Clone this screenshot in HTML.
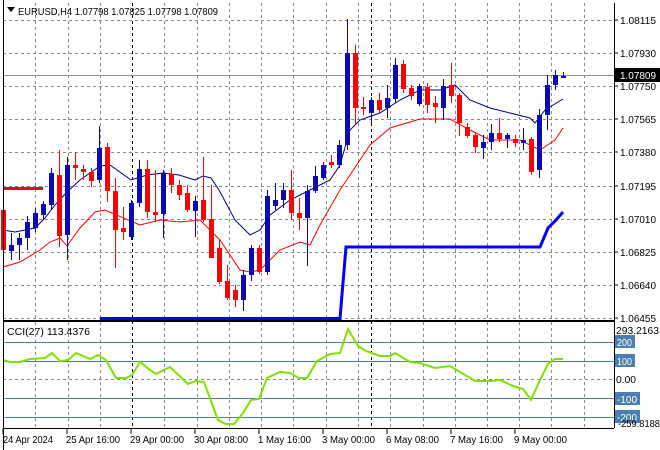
<!DOCTYPE html>
<html><head><meta charset="utf-8"><style>
html,body{margin:0;padding:0;background:#fff;width:660px;height:450px;overflow:hidden}
svg{display:block;font-family:"Liberation Sans",sans-serif;font-size:10.5px}
</style></head><body>
<svg width="660" height="450" xmlns="http://www.w3.org/2000/svg">
<rect width="660" height="450" fill="#fff"/>
<g stroke="#7f8a96" stroke-width="1" stroke-dasharray="3,3">
<path d="M3 20.5H614M3 53.5H614M3 86.5H614M3 119.5H614M3 152.5H614M3 186.5H614M3 219.5H614M3 252.5H614M3 285.5H614M3 318.5H614M3 379.5H614"/>
<path d="M35.5 3V320M100.5 3V320M164.5 3V320M229.5 3V320M293.5 3V320M326.5 3V320M390.5 3V320M423.5 3V320M455.5 3V320M487.5 3V320M519.5 3V320M551.5 3V320M584.5 3V320M68.5 3V320M197.5 3V320M261.5 3V320M358.5 3V320"/>
<path d="M35.5 322V428M68.5 322V428M100.5 322V428M164.5 322V428M197.5 322V428M229.5 322V428M261.5 322V428M293.5 322V428M326.5 322V428M358.5 322V428M390.5 322V428M423.5 322V428M455.5 322V428M487.5 322V428M519.5 322V428M551.5 322V428M584.5 322V428"/>
</g>
<g stroke="#000" stroke-dasharray="3,3"><path d="M132.5 3V428M371.5 3V428"/></g>
<path d="M3 75.5H614" stroke="#8a9098"/>
<g stroke="#4a7fb0"><path d="M3 342.5H614M3 361.5H614M3 398.5H614M3 417.5H614"/></g>
<path d="M3 188.5H43" stroke="#f00" stroke-width="3"/>
<path d="M100 318.5H340L346 247H540L548 228L556 220L563 212" fill="none" stroke="#0000ff" stroke-width="3"/>
<polyline fill="none" stroke="#000080" stroke-width="1" points="3,230 15,232 35,228 45,218 55,205 67,192 80,180 100,166 110,165 131,180 147,175 163,173 179,175 195,180 203,176 211,178 219,190 235,220 250,235 260,230 270,215 290,200 320,185 330,180 340,165 350,130 360,120 380,113 400,100 420,90 440,90 455,85 470,100 490,108 510,113 530,118 535,123 545,110 563,99"/>
<polyline fill="none" stroke="#f00" stroke-width="1" points="3,267 20,262 40,250 50,242 60,238 67,246 80,228 95,212 105,210 112,213 140,225 160,220 180,222 200,220 220,240 240,270 250,272 260,270 280,250 300,242 310,245 320,225 340,190 370,145 390,128 420,119 450,119 470,130 490,140 520,140 540,150 555,140 563,128"/>
<g stroke="#f00" fill="#f00">
<path d="M3.5 210V258M59.5 150V247M75.5 152V180M83.5 165V180M91.5 168V187M107.5 143V202M115.5 178V268M123.5 207V240M147.5 160V218M155.5 170V222M171.5 168V193M179.5 180V200M187.5 185V212M203.5 157V222M211.5 185V258M219.5 240V284M227.5 265V300M235.5 285V307M259.5 245V274M291.5 170V220M299.5 198V230M331.5 155V168M355.5 45V125M363.5 97V115M379.5 93V113M403.5 60V93M411.5 85V100M427.5 83V113M435.5 96V123M451.5 63V103M459.5 93V136M467.5 123V138M475.5 132V153M499.5 118V142M515.5 135V147M531.5 137V175"/>
</g>
<g fill="#f00">
<rect x="1" y="210" width="5" height="40"/><rect x="57" y="175" width="5" height="61"/><rect x="73" y="165" width="5" height="3"/><rect x="81" y="169" width="5" height="3"/><rect x="89" y="172" width="5" height="9"/><rect x="105" y="147" width="5" height="44"/><rect x="113" y="191" width="5" height="39"/><rect x="121" y="228" width="5" height="4"/><rect x="145" y="169" width="5" height="43"/><rect x="153" y="212" width="5" height="3"/><rect x="169" y="174" width="5" height="11"/><rect x="177" y="185" width="5" height="10"/><rect x="185" y="193" width="5" height="17"/><rect x="201" y="200" width="5" height="20"/><rect x="209" y="219" width="5" height="39"/><rect x="217" y="248" width="5" height="34"/><rect x="225" y="281" width="5" height="17"/><rect x="233" y="290" width="5" height="10"/><rect x="257" y="248" width="5" height="24"/><rect x="289" y="190" width="5" height="23"/><rect x="297" y="213" width="5" height="5"/><rect x="329" y="162" width="5" height="3"/><rect x="353" y="53" width="5" height="55"/><rect x="361" y="107" width="5" height="2"/><rect x="377" y="100" width="5" height="10"/><rect x="401" y="64" width="5" height="25"/><rect x="409" y="88" width="5" height="8"/><rect x="425" y="87" width="5" height="18"/><rect x="433" y="103" width="5" height="4"/><rect x="449" y="85" width="5" height="11"/><rect x="457" y="95" width="5" height="28"/><rect x="465" y="127" width="5" height="9"/><rect x="473" y="135" width="5" height="12"/><rect x="497" y="133" width="5" height="6"/><rect x="513" y="139" width="5" height="4"/><rect x="529" y="139" width="5" height="33"/>
</g>
<g stroke="#0000c0">
<path d="M11.5 233V260M19.5 233V260M27.5 216V250M35.5 208V232M43.5 201V220M51.5 168V210M67.5 157V260M99.5 126V183M131.5 200V240M139.5 160V207M163.5 170V238M195.5 196V237M243.5 270V311M251.5 245V281M267.5 190V275M275.5 183V210M283.5 183V208M307.5 185V266M315.5 166V193M323.5 162V180M339.5 140V168M347.5 19V150M371.5 97V125M387.5 85V118M395.5 58V103M419.5 84V106M443.5 79V120M483.5 135V159M491.5 124V150M507.5 133V148M523.5 128V150M539.5 109V178M547.5 75V130M555.5 70V90M563.5 72V78"/>
</g>
<g fill="#0a0ab4">
<rect x="9" y="245" width="5" height="6"/><rect x="17" y="238" width="5" height="7"/><rect x="25" y="222" width="5" height="16"/><rect x="33" y="213" width="5" height="15"/><rect x="41" y="204" width="5" height="11"/><rect x="49" y="173" width="5" height="32"/><rect x="65" y="165" width="5" height="70"/><rect x="97" y="148" width="5" height="32"/><rect x="129" y="203" width="5" height="34"/><rect x="137" y="169" width="5" height="34"/><rect x="161" y="173" width="5" height="41"/><rect x="193" y="201" width="5" height="10"/><rect x="241" y="275" width="5" height="25"/><rect x="249" y="248" width="5" height="27"/><rect x="265" y="196" width="5" height="76"/><rect x="273" y="200" width="5" height="6"/><rect x="281" y="190" width="5" height="10"/><rect x="305" y="191" width="5" height="27"/><rect x="313" y="176" width="5" height="15"/><rect x="321" y="165" width="5" height="13"/><rect x="337" y="145" width="5" height="20"/><rect x="345" y="53" width="5" height="92"/><rect x="369" y="100" width="5" height="13"/><rect x="385" y="98" width="5" height="10"/><rect x="393" y="65" width="5" height="34"/><rect x="417" y="86" width="5" height="18"/><rect x="441" y="86" width="5" height="22"/><rect x="481" y="142" width="5" height="6"/><rect x="489" y="133" width="5" height="9"/><rect x="505" y="135" width="5" height="4"/><rect x="521" y="140" width="5" height="3"/><rect x="537" y="115" width="5" height="55"/><rect x="545" y="85" width="5" height="30"/><rect x="553" y="75" width="5" height="10"/><rect x="561" y="76" width="5" height="2"/>
</g>
<polyline fill="none" stroke="#7fe000" stroke-width="2" points="3,360 10,362 20,362 30,359 45,358 52,353 60,361 68,360 76,353 90,359 98,355 106,360 116,378 126,378 132,375 140,362 150,370 156,374 170,367 188,384 196,381 204,382 218,420 226,424 234,424 243,413 251,400 259,399 267,378 280,372 290,373 299,378 307,378 317,361 330,354 340,353 348,329 358,346 366,351 380,356 390,356 395,353 410,362 420,363 435,368 450,366 460,372 475,381 490,381 500,380 513,386 523,389 531,400 540,380 548,364 555,359 563,359"/>
<g fill="none" stroke="#000"><path d="M3.5 0V450M614.5 3V428M3 320.5H614M3 321.5H614M3 428.5H614"/></g>
<path d="M3 428V434M67 428V434M131 428V434M195 428V434M259 428V434M323 428V434M387 428V434M451 428V434M515 428V434M614 20H618M614 53H618M614 86H618M614 119H618M614 152H618M614 186H618M614 219H618M614 252H618M614 285H618M614 318H618" stroke="#000"/>
<path d="M7 7L15 7L11 12Z" fill="#000"/>
<text x="18" y="15" fill="#000" textLength="200" lengthAdjust="spacingAndGlyphs">EURUSD,H4  1.07798 1.07825 1.07798 1.07809</text>
<text x="7" y="335" fill="#000" textLength="83" lengthAdjust="spacingAndGlyphs">CCI(27) 113.4376</text>
<g fill="#000">
<text x="620" y="24" textLength="36" lengthAdjust="spacingAndGlyphs">1.08115</text><text x="620" y="57" textLength="36" lengthAdjust="spacingAndGlyphs">1.07930</text><text x="620" y="90" textLength="36" lengthAdjust="spacingAndGlyphs">1.07750</text><text x="620" y="123" textLength="36" lengthAdjust="spacingAndGlyphs">1.07565</text><text x="620" y="156" textLength="36" lengthAdjust="spacingAndGlyphs">1.07380</text><text x="620" y="190" textLength="36" lengthAdjust="spacingAndGlyphs">1.07195</text><text x="620" y="223" textLength="36" lengthAdjust="spacingAndGlyphs">1.07010</text><text x="620" y="256" textLength="36" lengthAdjust="spacingAndGlyphs">1.06825</text><text x="620" y="289" textLength="36" lengthAdjust="spacingAndGlyphs">1.06640</text><text x="620" y="322" textLength="36" lengthAdjust="spacingAndGlyphs">1.06455</text>
</g>
<rect x="615" y="68" width="45" height="14" fill="#000"/>
<text x="620" y="79" fill="#fff" textLength="36" lengthAdjust="spacingAndGlyphs">1.07809</text>
<g fill="#4a7fb0"><rect x="615" y="335" width="20" height="13"/><rect x="615" y="354" width="20" height="13"/><rect x="615" y="392" width="25" height="13"/><rect x="615" y="410" width="25" height="13"/></g>
<g fill="#fff"><text x="617" y="346" textLength="15" lengthAdjust="spacingAndGlyphs">200</text><text x="617" y="365" textLength="15" lengthAdjust="spacingAndGlyphs">100</text><text x="617" y="403" textLength="20" lengthAdjust="spacingAndGlyphs">-100</text><text x="617" y="421" textLength="20" lengthAdjust="spacingAndGlyphs">-200</text></g>
<g fill="#000"><text x="616" y="334" textLength="43" lengthAdjust="spacingAndGlyphs">293.2163</text><text x="616" y="383" textLength="20" lengthAdjust="spacingAndGlyphs">0.00</text><text x="618" y="427" textLength="42" lengthAdjust="spacingAndGlyphs">-259.8188</text></g>
<g fill="#000">
<text x="3" y="443" textLength="50" lengthAdjust="spacingAndGlyphs">24 Apr 2024</text><text x="66" y="443" textLength="54" lengthAdjust="spacingAndGlyphs">25 Apr 16:00</text><text x="130" y="443" textLength="54" lengthAdjust="spacingAndGlyphs">29 Apr 00:00</text><text x="194" y="443" textLength="54" lengthAdjust="spacingAndGlyphs">30 Apr 08:00</text><text x="258" y="443" textLength="53" lengthAdjust="spacingAndGlyphs">1 May 16:00</text><text x="322" y="443" textLength="53" lengthAdjust="spacingAndGlyphs">3 May 00:00</text><text x="386" y="443" textLength="53" lengthAdjust="spacingAndGlyphs">6 May 08:00</text><text x="450" y="443" textLength="53" lengthAdjust="spacingAndGlyphs">7 May 16:00</text><text x="514" y="443" textLength="53" lengthAdjust="spacingAndGlyphs">9 May 00:00</text>
</g>
</svg>
</body></html>
